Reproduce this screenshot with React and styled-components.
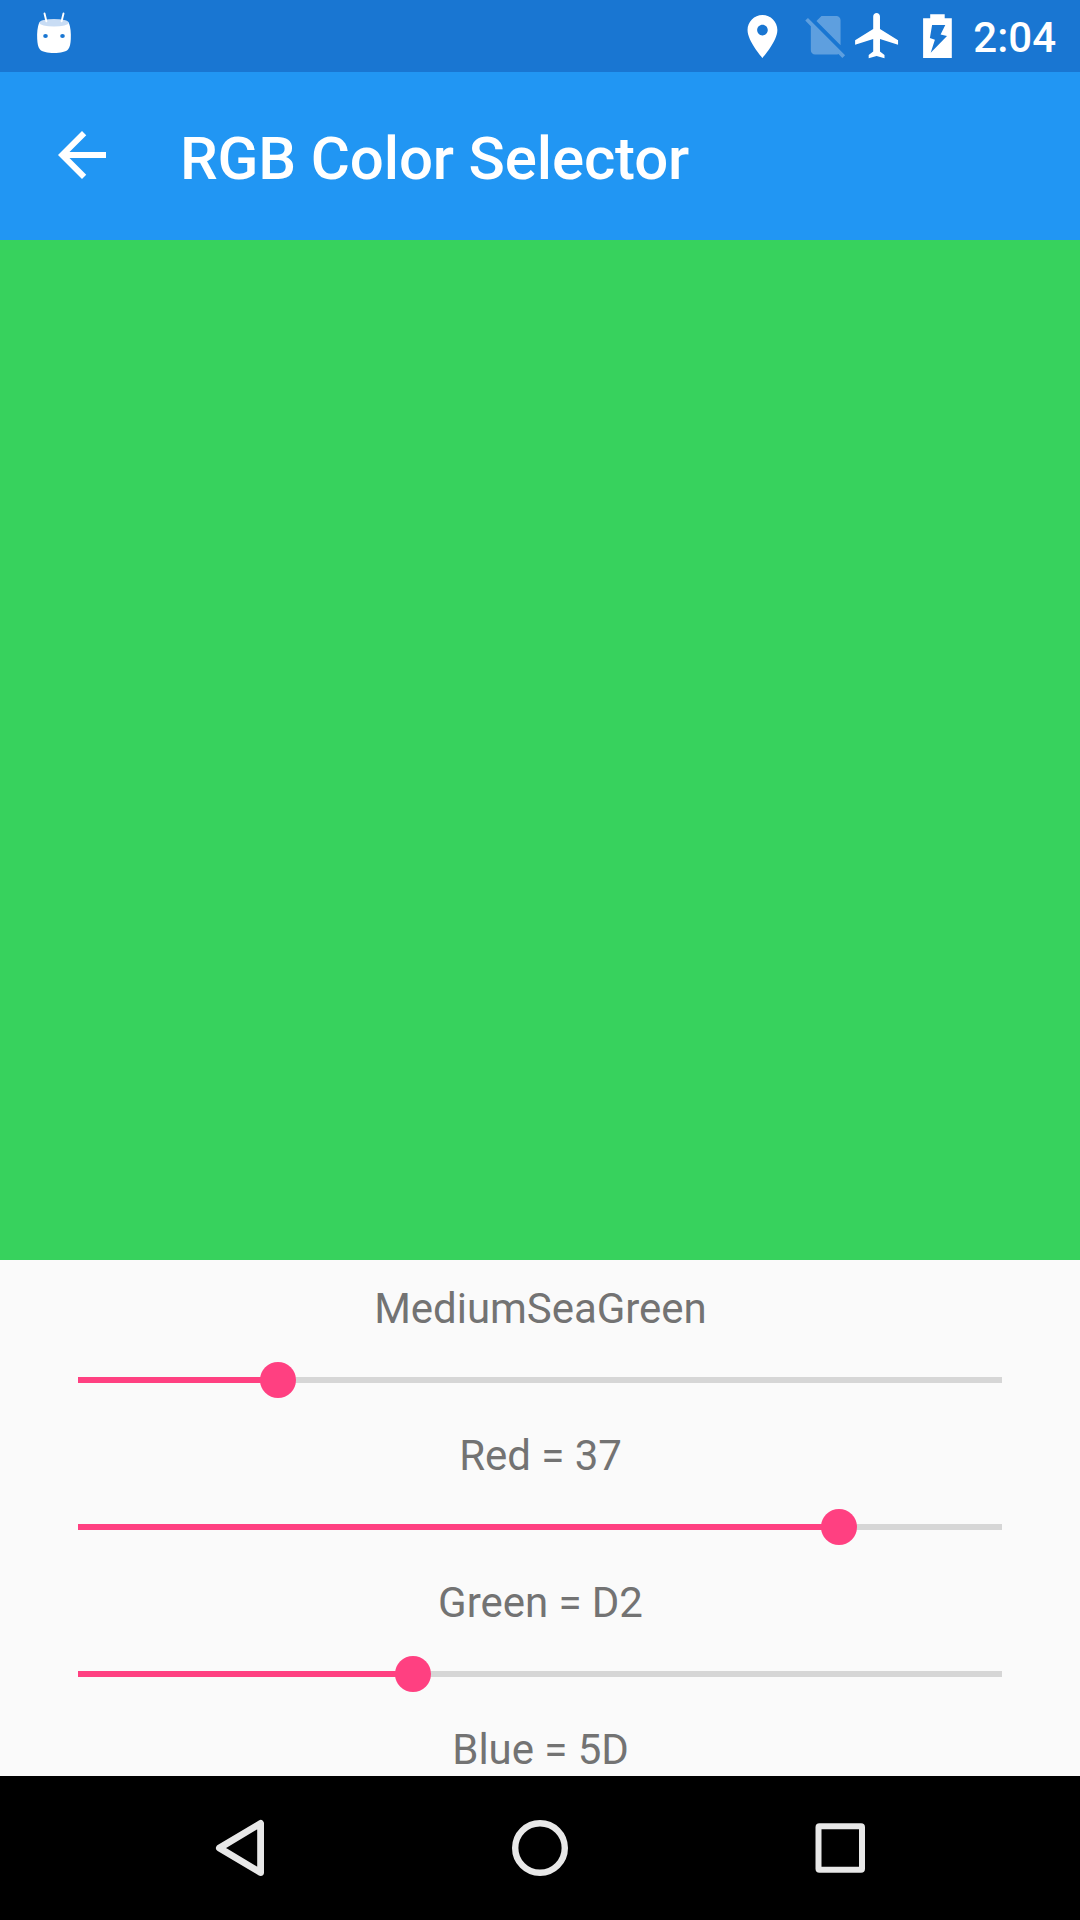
import React from "react";
import styled, { createGlobalStyle } from "styled-components";

const GlobalStyle = createGlobalStyle`
  *, *::before, *::after { box-sizing: border-box; }
  body { margin: 0; background: #fafafa; font-family: Roboto, "Liberation Sans", sans-serif; }
`;

const Screen = styled.div`
  display: flex;
  flex-direction: column;
  width: 1080px;
  height: 1920px;
  overflow: hidden;
  background: #fafafa;
`;

const StatusBar = styled.header`
  display: flex;
  flex: none;
  align-items: center;
  height: 72px;
  padding: 0 24px 0 30px;
  background: #1976d2;
  color: #fff;
`;

const StatusIcon = styled.svg`
  display: block;
  flex: none;
  width: ${(p) => p.$width}px;
  height: 72px;
  margin-left: ${(p) => p.$before || 0}px;
  fill: currentColor;
`;

const Spacer = styled.div`
  flex: 1;
`;

const Clock = styled.time`
  margin-left: 11px;
  padding-top: 3px;
  font-size: 42px;
  font-weight: 500;
  line-height: 50px;
`;

const AppBar = styled.div`
  display: flex;
  flex: none;
  align-items: center;
  height: 168px;
  padding: 0 46px;
  background: #2196f3;
  color: #fff;
`;

const BackButton = styled.button`
  display: block;
  width: 72px;
  height: 72px;
  margin: 0 62px 2px 0;
  padding: 0;
  border: 0;
  background: none;
  color: inherit;

  svg {
    display: block;
    width: 72px;
    height: 72px;
    fill: currentColor;
  }
`;

const Title = styled.h1`
  margin: 0;
  padding-top: 6px;
  font-size: 60px;
  font-weight: 500;
  letter-spacing: -0.15px;
  line-height: 70px;
  white-space: nowrap;
`;

const Swatch = styled.div`
  flex: none;
  height: 1020px;
  background: ${(p) => p.$color};
`;

const Controls = styled.main`
  display: flex;
  flex: none;
  flex-direction: column;
  height: 516px;
  padding-top: 23px;
`;

const Label = styled.div`
  height: 52px;
  padding-left: 1px;
  font-size: 42px;
  letter-spacing: -0.04px;
  line-height: 52px;
  text-align: center;
  color: #737373;
`;

const SliderRow = styled.div`
  display: flex;
  align-items: center;
  height: 90px;
  margin-bottom: 5px;
  padding: 0 78px;
`;

const Filled = styled.div`
  height: 6px;
  background: #ff4081;
`;

const Thumb = styled.div`
  flex: none;
  width: 36px;
  height: 36px;
  margin: 0 -1px;
  border-radius: 50%;
  background: #ff4081;
  z-index: 1;
`;

const Rest = styled.div`
  flex: 1;
  height: 6px;
  background: #d6d6d6;
`;

const NavBar = styled.nav`
  display: flex;
  flex: none;
  align-items: center;
  justify-content: space-between;
  height: 144px;
  padding: 0 190px;
  background: #000;
`;

const NavIcon = styled.svg`
  display: block;
  width: 100px;
  height: 100px;
  fill: none;
  stroke: #e8e8e8;
  stroke-width: ${(p) => p.$stroke}px;
  stroke-linejoin: round;
`;

const channels = [
  { name: "Red", hex: "37", fill: 183 },
  { name: "Green", hex: "D2", fill: 744 },
  { name: "Blue", hex: "5D", fill: 318 },
];

function Slider({ fill }) {
  return (
    <SliderRow>
      <Filled style={{ width: fill }} />
      <Thumb />
      <Rest />
    </SliderRow>
  );
}

export default function App() {
  return (
    <Screen>
      <GlobalStyle />
      <StatusBar>
        <StatusIcon $width={48} viewBox="30 0 48 72">
          <path d="M39.2 22.5C37.4 27 36.9 33 37.2 39c.2 4.800 1 8.200 2.600 10.200C41.800 51.700 47.500 53 54 53s12.200-1.300 14.200-3.800c1.600-2 2.400-5.400 2.600-10.200.3-6-.2-12-2-16.500z" />
          <ellipse cx="54" cy="22.700" rx="14.700" ry="3.800" fill="#c8dcf4" />
          <path d="M44.500 13.500l1.900 7.800M63.500 13.500l-1.900 7.800" stroke="currentColor" strokeWidth="1.900" strokeLinecap="round" />
          <ellipse cx="45.500" cy="35.900" rx="2.300" ry="2" fill="#1976d2" />
          <ellipse cx="62.500" cy="35.900" rx="2.300" ry="2" fill="#1976d2" />
        </StatusIcon>
        <Spacer />
        <StatusIcon $width={48} viewBox="738 0 48 72">
          <path transform="translate(736.900 10.700) scale(2.130 2.150)" d="M12 2C8.130 2 5 5.130 5 9c0 5.250 7 13 7 13s7-7.750 7-13c0-3.870-3.130-7-7-7zm0 9.500c-1.380 0-2.500-1.120-2.500-2.500s1.120-2.500 2.500-2.500 2.500 1.120 2.500 2.500-1.120 2.500-2.500 2.500z" />
        </StatusIcon>
        <StatusIcon $width={52} $before={12} viewBox="798 0 52 72">
          <path transform="translate(800.200 9.600) scale(2.125 2.140)" fillOpacity=".3" d="M18.990 5c0-1.100-.89-2-1.990-2h-7L7.660 5.340 19 16.680 18.990 5zM3.650 3.880L2.380 5.150 5 7.770V19c0 1.100.9 2 2 2h10.010c.35 0 .67-.1.960-.26l1.880 1.880 1.270-1.270L3.650 3.880z" />
        </StatusIcon>
        <StatusIcon $width={54} viewBox="850 0 54 72">
          <path transform="translate(850.600 8.600) scale(2.260)" d="M21 16v-2l-8-5V3.500c0-.83-.67-1.500-1.500-1.500S10 2.670 10 3.500V9l-8 5v2l8-2.500V19l-2 1.500V22l3.500-1 3.500 1v-1.500L13 19v-5.500l8 2.500z" />
        </StatusIcon>
        <StatusIcon $width={48} $before={10} viewBox="914 0 48 72">
          <path fillRule="evenodd" d="M930.200 14.200h14.500v4H951.800v39.700h-28.700V18.200h7.100zM932.100 24.900l-2.200 13.200 5 1.700-4.200 13 16.300-16.900-6.400-1.300 4.700-9.700z" />
        </StatusIcon>
        <Clock>2:04</Clock>
      </StatusBar>
      <AppBar>
        <BackButton aria-label="Back">
          <svg viewBox="0 0 24 24">
            <path d="M20 11H7.830l5.590-5.590L12 4l-8 8 8 8 1.410-1.410L7.830 13H20v-2z" />
          </svg>
        </BackButton>
        <Title>RGB Color Selector</Title>
      </AppBar>
      <Swatch $color="#37d25d" />
      <Controls>
        <Label>MediumSeaGreen</Label>
        {channels.map((c) => (
          <React.Fragment key={c.name}>
            <Slider fill={c.fill} />
            <Label>{`${c.name} = ${c.hex}`}</Label>
          </React.Fragment>
        ))}
      </Controls>
      <NavBar>
        <NavIcon $stroke={6.8} viewBox="0 0 100 100">
          <path d="M29.400 50L70.600 25.400v49.200z" />
        </NavIcon>
        <NavIcon $stroke={6.4} viewBox="0 0 100 100">
          <circle cx="50" cy="50" r="24.800" />
        </NavIcon>
        <NavIcon $stroke={6} viewBox="0 0 100 100">
          <rect x="28.500" y="28.300" width="43.500" height="43.500" rx="1" />
        </NavIcon>
      </NavBar>
    </Screen>
  );
}
